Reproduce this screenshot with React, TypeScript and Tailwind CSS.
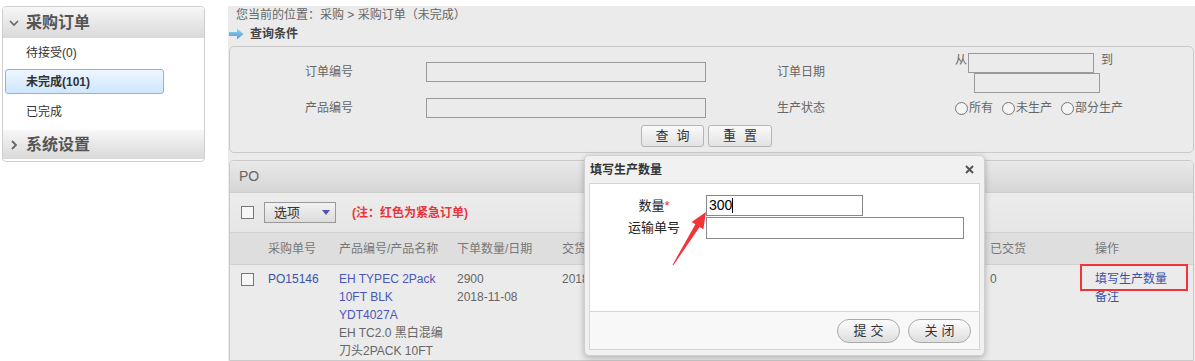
import React from 'react';

const font = { fontFamily: '"Liberation Sans", "Noto Sans CJK SC", sans-serif' };

const ChevronDown = () => (
  <svg width="10" height="8" viewBox="0 0 10 8" className="mr-[7px]">
    <path d="M1 2 L5 6 L9 2" fill="none" stroke="#666" strokeWidth="1.6" />
  </svg>
);

const ChevronRight = () => (
  <svg width="10" height="10" viewBox="0 0 10 10" className="mr-[7px]">
    <path d="M3 1 L7 5 L3 9" fill="none" stroke="#666" strokeWidth="1.8" />
  </svg>
);

const BlueArrow = () => (
  <svg width="15" height="12" viewBox="0 0 15 12" className="mr-[6px]">
    <defs>
      <linearGradient id="ba" x1="0" y1="0" x2="0" y2="1">
        <stop offset="0" stopColor="#9fd3f5" />
        <stop offset="1" stopColor="#3f9ad8" />
      </linearGradient>
    </defs>
    <path d="M0 4 H8 V0.5 L14.5 6 L8 11.5 V8 H0 Z" fill="url(#ba)" />
  </svg>
);

const Radio = ({ label }: { label: string }) => (
  <span className="flex items-center mr-[9px]">
    <span className="w-[13px] h-[13px] rounded-full border border-[#777] bg-[#f4f4f4] mr-[1px]" />
    <span>{label}</span>
  </span>
);

const Checkbox = () => <span className="block w-[13px] h-[13px] border border-[#777] bg-[#f6f6f6]" />;

function Sidebar() {
  return (
    <div className="mt-[6px] ml-[2px] w-[203px] h-[156px] border border-[#cfcfcf] rounded-[4px] bg-white overflow-hidden flex flex-col">
      <div className="h-[31px] flex items-center pl-[6px] bg-gradient-to-b from-[#f7f7f7] to-[#d9d9d9] text-[16px] font-bold text-[#555]">
        <ChevronDown />
        采购订单
      </div>
      <div className="h-[30px] flex items-center pl-[23px] text-[12px] text-[#333]">待接受(0)</div>
      <div className="mt-[1px] mx-[2px] w-[159px] h-[25px] flex items-center pl-[20px] text-[12px] font-bold text-[#333] border border-[#8ab4dd] rounded-[3px] bg-gradient-to-b from-[#eef6ff] to-[#cfe6fc]">
        未完成(101)
      </div>
      <div className="h-[36px] flex items-center pl-[23px] text-[12px] text-[#333]">已完成</div>
      <div className="h-[29px] flex items-center pl-[6px] bg-gradient-to-b from-[#f7f7f7] to-[#d9d9d9] text-[16px] font-bold text-[#555]">
        <ChevronRight />
        系统设置
      </div>
    </div>
  );
}

function QueryBox() {
  return (
    <div className="mt-[3px] ml-[1px] mr-[1px] h-[107px] border border-[#cacaca] rounded-[5px] text-[12px] text-[#666] flex flex-col pt-[5px]">
      <div className="flex h-[41px]">
        <div className="w-[196px] pl-[75px] h-[40px] flex items-center">订单编号</div>
        <div className="w-[280px] h-[20px] mt-[10px] border border-[#999] bg-[#ebebeb]" />
        <div className="w-[71px]" />
        <div className="w-[178px] h-[40px] flex items-center">订单日期</div>
        <div className="flex flex-col">
          <div className="flex items-center h-[21px]">
            <span className="w-[13px] self-start leading-[16px]">从</span>
            <span className="w-[126px] h-[20px] border border-[#999] bg-[#ebebeb]" />
            <span className="ml-[7px] self-start leading-[16px]">到</span>
          </div>
          <div className="ml-[19px] w-[126px] h-[20px] border border-[#999] bg-[#ebebeb]" />
        </div>
      </div>
      <div className="flex h-[20px] mt-[5px] items-center">
        <div className="w-[196px] pl-[75px]">产品编号</div>
        <div className="w-[280px] h-[20px] border border-[#999] bg-[#ebebeb]" />
        <div className="w-[71px]" />
        <div className="w-[178px]">生产状态</div>
        <div className="flex items-center">
          <Radio label="所有" />
          <Radio label="未生产" />
          <Radio label="部分生产" />
        </div>
      </div>
      <div className="flex mt-[7px] pl-[411px] gap-[4px]">
        <button className="w-[63px] h-[22px] border border-[#b5b5b5] rounded-[3px] bg-gradient-to-b from-[#fafafa] to-[#e2e2e2] text-[#333] text-[13px] tracking-[8px] pl-[8px]">查询</button>
        <button className="w-[64px] h-[22px] border border-[#b5b5b5] rounded-[3px] bg-gradient-to-b from-[#fafafa] to-[#e2e2e2] text-[#333] text-[13px] tracking-[8px] pl-[8px]">重置</button>
      </div>
    </div>
  );
}

const cols = [
  { w: 'w-[30px]', label: '' },
  { w: 'w-[71px]', label: '采购单号' },
  { w: 'w-[118px]', label: '产品编号/产品名称' },
  { w: 'w-[105px]', label: '下单数量/日期' },
  { w: 'w-[110px]', label: '交货日期' },
  { w: 'w-[110px]', label: '已生产' },
  { w: 'w-[104px]', label: '未生产' },
  { w: 'w-[104px]', label: '交货数量' },
  { w: 'w-[105px]', label: '已交货' },
  { w: 'w-[105px]', label: '操作' },
];

function PoPanel() {
  return (
    <div className="mt-[7px] ml-[1px] mr-[1px] flex-1 border border-[#cacaca] rounded-t-[5px] text-[12px] flex flex-col overflow-hidden">
      <div className="h-[32px] flex items-center pl-[9px] text-[14px] text-[#666] bg-gradient-to-b from-[#e9e9e9] to-[#d6d6d6] border-b border-[#cfcfcf]">PO</div>
      <div className="h-[41px] flex items-center pl-[11px] border-b border-[#d2d2d2] bg-gradient-to-b from-[#ececec] to-[#e6e6e6]">
        <Checkbox />
        <div className="ml-[10px] w-[72px] h-[21px] border border-[#999] bg-gradient-to-b from-[#f2f2f2] to-[#dcdcdc] flex items-center pl-[9px] text-[#333] text-[13px]">
          选项
          <svg width="8" height="5" viewBox="0 0 8 5" className="ml-[22px]">
            <path d="M0 0 H8 L4 5 Z" fill="#4a55b5" />
          </svg>
        </div>
        <span className="ml-[16px] text-[#e8353a] font-bold">(注：红色为紧急订单)</span>
      </div>
      <div className="h-[32px] flex items-center bg-[#dedede] border-b border-[#d0d0d0] text-[#777]">
        {cols.map((c, i) => (
          <div key={i} className={`${c.w} shrink-0 pl-[8px] whitespace-nowrap overflow-hidden`}>{c.label}</div>
        ))}
      </div>
      <div className="flex items-start pt-[5px] leading-[18px] text-[#666] bg-[#ebebeb] flex-1">
        <div className="w-[30px] shrink-0 pl-[11px] pt-[3px]"><Checkbox /></div>
        <div className="w-[71px] shrink-0 pl-[8px] text-[#3a52a8]">PO15146</div>
        <div className="w-[118px] shrink-0 pl-[8px]">
          <div className="text-[#4a56b8]">EH TYPEC 2Pack</div>
          <div className="text-[#4a56b8]">10FT BLK</div>
          <div className="text-[#4a56b8]">YDT4027A</div>
          <div>EH TC2.0 黑白混编</div>
          <div>刀头2PACK 10FT</div>
        </div>
        <div className="w-[105px] shrink-0 pl-[8px]">
          <div>2900</div>
          <div>2018-11-08</div>
        </div>
        <div className="w-[110px] shrink-0 pl-[8px]">2018-11-20</div>
        <div className="w-[110px] shrink-0 pl-[8px]">0</div>
        <div className="w-[104px] shrink-0 pl-[8px]">2900</div>
        <div className="w-[104px] shrink-0 pl-[8px]">0</div>
        <div className="w-[105px] shrink-0 pl-[8px]">0</div>
        <div className="w-[105px] shrink-0 pl-[8px] text-[#3a52a8]">
          <div>填写生产数量</div>
          <div>备注</div>
        </div>
      </div>
    </div>
  );
}

function Dialog() {
  return (
    <div className="absolute left-[584px] top-[155px] w-[401px] h-[201px] bg-[#f1f1f1] border border-[#cfcfcf] rounded-[5px] shadow-[0_2px_6px_rgba(0,0,0,0.25)] flex flex-col px-[4px] pb-[5px] text-[12px]">
      <div className="h-[27px] flex items-center justify-between pl-[1px] pr-[6px]">
        <span className="font-bold text-[#333]">填写生产数量</span>
        <svg width="9" height="9" viewBox="0 0 9 9">
          <path d="M1 1 L8 8 M8 1 L1 8" stroke="#555" strokeWidth="2" />
        </svg>
      </div>
      <div className="flex-1 border border-[#d5d5d5] bg-white flex flex-col">
        <div className="flex-1 pt-[11px] flex flex-col gap-[1px]">
          <div className="flex items-center h-[21px]">
            <div className="w-[116px] pl-[12px] text-center text-[13px] text-[#222]">数量<span className="text-[#e33]">*</span></div>
            <div className="w-[157px] h-[21px] border border-[#888] flex items-center pl-[2px] text-[14px] text-black">
              300<span className="inline-block w-px h-[15px] bg-black" />
            </div>
          </div>
          <div className="flex items-center h-[22px]">
            <div className="w-[116px] pl-[12px] text-center text-[13px] text-[#222]">运输单号</div>
            <div className="w-[258px] h-[22px] border border-[#888]" />
          </div>
        </div>
        <div className="h-[38px] border-t border-[#d5d5d5] bg-[#f8f8f8] flex items-center justify-end gap-[8px] pr-[8px]">
          <button className="w-[63px] h-[24px] rounded-full border border-[#aaa] bg-gradient-to-b from-[#fdfdfd] to-[#dedede] text-[13px] text-[#333] tracking-[4px] pl-[4px]">提交</button>
          <button className="w-[63px] h-[24px] rounded-full border border-[#aaa] bg-gradient-to-b from-[#fdfdfd] to-[#dedede] text-[13px] text-[#333] tracking-[4px] pl-[4px]">关闭</button>
        </div>
      </div>
    </div>
  );
}

export default function App() {
  return (
    <div className="relative w-[1195px] h-[361px] bg-white flex overflow-hidden" style={font}>
      <Sidebar />
      <div className="ml-[23px] mt-[6px] flex-1 bg-[#ebebeb] flex flex-col">
        <div className="h-[18px] flex items-center pl-[8px] text-[12px] text-[#666]">您当前的位置：采购 &gt; 采购订单（未完成）</div>
        <div className="h-[19px] flex items-center pl-[1px] text-[12px] font-bold text-[#444]">
          <BlueArrow />
          查询条件
        </div>
        <QueryBox />
        <PoPanel />
      </div>
      <Dialog />
      <div className="absolute left-[1080px] top-[264px] w-[108px] h-[27px] border-2 border-[#f2333a]" />
      <svg className="absolute left-0 top-0 pointer-events-none" width="1195" height="361">
        <polygon
          points="706,212 703.4,229.3 699.6,226.9 673.4,265.3 672.6,264.7 695.4,224.3 691.6,221.9"
          fill="#f2333a"
        />
      </svg>
    </div>
  );
}
